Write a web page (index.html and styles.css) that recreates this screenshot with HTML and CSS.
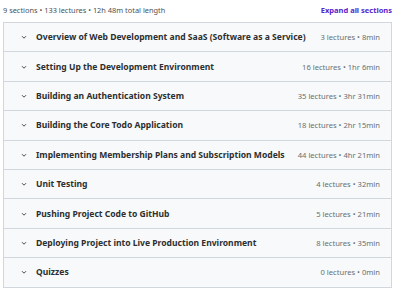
FILE: index.html
```html
<!DOCTYPE html>
<html>

<head>
    <meta charset="UTF-8" />
    <title>Course content</title>
    <link rel="stylesheet" href="styles.css">
</head>

<body>
    <div class="content">
        <div class="summary">
            <span class="stats">9 sections • 133 lectures • 12h 48m total length</span>
            <button class="expand-btn">Expand all sections</button>
        </div>
        <div class="sections">
            <div class="section">
                <span class="chevron"><svg width="8" height="8" viewBox="0 0 10 10"><path d="M2.5 4 L5 6.5 L7.5 4" fill="none" stroke="#2d2f31" stroke-width="1.1"/></svg></span>
                <span class="title">Overview of Web Development and SaaS (Software as a Service)</span>
                <span class="meta">3 lectures • 8min</span>
            </div>
            <div class="section">
                <span class="chevron"><svg width="8" height="8" viewBox="0 0 10 10"><path d="M2.5 4 L5 6.5 L7.5 4" fill="none" stroke="#2d2f31" stroke-width="1.1"/></svg></span>
                <span class="title">Setting Up the Development Environment</span>
                <span class="meta">16 lectures • 1hr 6min</span>
            </div>
            <div class="section">
                <span class="chevron"><svg width="8" height="8" viewBox="0 0 10 10"><path d="M2.5 4 L5 6.5 L7.5 4" fill="none" stroke="#2d2f31" stroke-width="1.1"/></svg></span>
                <span class="title">Building an Authentication System</span>
                <span class="meta">35 lectures • 3hr 31min</span>
            </div>
            <div class="section">
                <span class="chevron"><svg width="8" height="8" viewBox="0 0 10 10"><path d="M2.5 4 L5 6.5 L7.5 4" fill="none" stroke="#2d2f31" stroke-width="1.1"/></svg></span>
                <span class="title">Building the Core Todo Application</span>
                <span class="meta">18 lectures • 2hr 15min</span>
            </div>
            <div class="section">
                <span class="chevron"><svg width="8" height="8" viewBox="0 0 10 10"><path d="M2.5 4 L5 6.5 L7.5 4" fill="none" stroke="#2d2f31" stroke-width="1.1"/></svg></span>
                <span class="title">Implementing Membership Plans and Subscription Models</span>
                <span class="meta">44 lectures • 4hr 21min</span>
            </div>
            <div class="section">
                <span class="chevron"><svg width="8" height="8" viewBox="0 0 10 10"><path d="M2.5 4 L5 6.5 L7.5 4" fill="none" stroke="#2d2f31" stroke-width="1.1"/></svg></span>
                <span class="title">Unit Testing</span>
                <span class="meta">4 lectures • 32min</span>
            </div>
            <div class="section">
                <span class="chevron"><svg width="8" height="8" viewBox="0 0 10 10"><path d="M2.5 4 L5 6.5 L7.5 4" fill="none" stroke="#2d2f31" stroke-width="1.1"/></svg></span>
                <span class="title">Pushing Project Code to GitHub</span>
                <span class="meta">5 lectures • 21min</span>
            </div>
            <div class="section">
                <span class="chevron"><svg width="8" height="8" viewBox="0 0 10 10"><path d="M2.5 4 L5 6.5 L7.5 4" fill="none" stroke="#2d2f31" stroke-width="1.1"/></svg></span>
                <span class="title">Deploying Project into Live Production Environment</span>
                <span class="meta">8 lectures • 35min</span>
            </div>
            <div class="section">
                <span class="chevron"><svg width="8" height="8" viewBox="0 0 10 10"><path d="M2.5 4 L5 6.5 L7.5 4" fill="none" stroke="#2d2f31" stroke-width="1.1"/></svg></span>
                <span class="title">Quizzes</span>
                <span class="meta">0 lectures • 0min</span>
            </div>
        </div>
    </div>
</body>

</html>
```

FILE: styles.css
```css
* {
    box-sizing: border-box;
}

body {
    margin: 0;
    background: #fff;
    font-family: "Noto Sans", Arial, sans-serif;
    color: #2d2f31;
}

.content {
    width: 392px;
    padding: 3px 0 0 3px;
}

.summary {
    display: flex;
    justify-content: space-between;
    align-items: center;
    height: 14px;
    margin-bottom: 5px;
}

.stats {
    font-size: 7.4px;
    color: #4d5256;
}

.expand-btn {
    background: none;
    border: none;
    padding: 0;
    font-family: inherit;
    font-size: 7.5px;
    font-weight: 700;
    color: #5624d0;
    cursor: pointer;
}

.sections {
    border: 1px solid #d1d7dc;
    border-bottom: none;
}

.section {
    display: flex;
    align-items: center;
    height: 29.4px;
    padding: 0 11px 0 16px;
    background: #f7f9fa;
    border-bottom: 1px solid #d1d7dc;
}

.chevron {
    display: flex;
    width: 16px;
}

.title {
    flex: 1;
    font-size: 8.55px;
    font-weight: 700;
}

.meta {
    font-size: 7.6px;
    color: #6a6f73;
}
```
